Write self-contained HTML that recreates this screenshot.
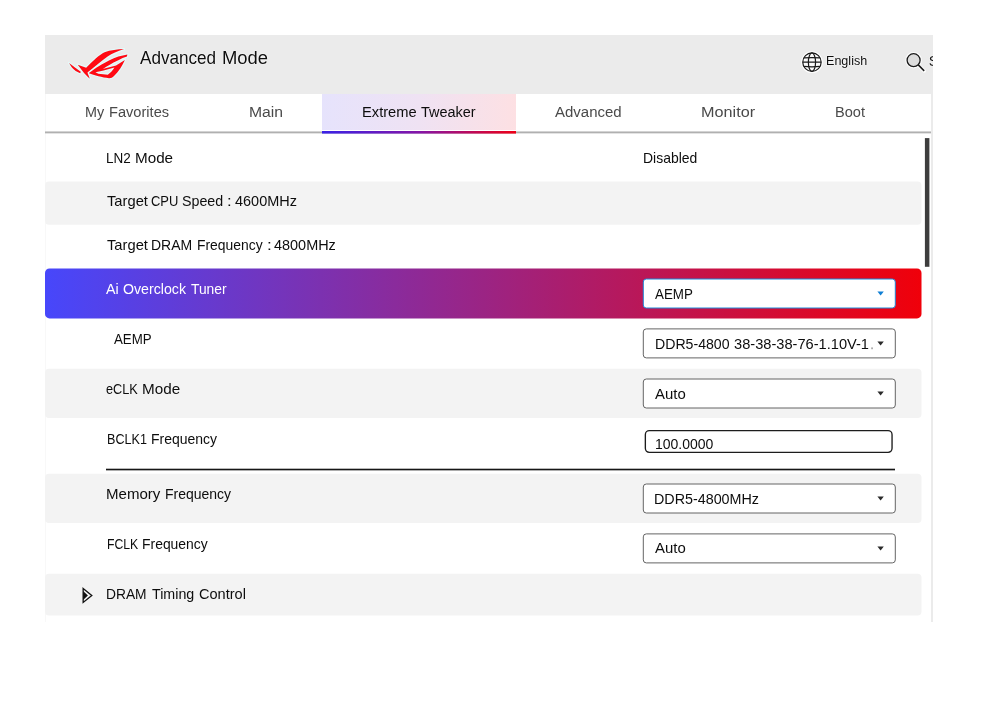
<!DOCTYPE html>
<html><head><meta charset="utf-8"><title>Advanced Mode</title>
<style>
html,body{margin:0;padding:0;background:#fff;}
body{width:983px;height:720px;position:relative;overflow:hidden;font-family:"Liberation Sans",sans-serif;}
.abs{position:absolute;}
.t{position:absolute;white-space:nowrap;line-height:1;transform-origin:0 0;font-family:"Liberation Sans",sans-serif;}
#hdr{position:absolute;left:45px;top:35px;width:888px;height:59px;background:#ebebeb;overflow:hidden;}
#tabs{position:absolute;left:45px;top:94px;width:886px;height:37px;background:#fff;}
#acttab{position:absolute;left:322px;top:94px;width:194px;height:36px;background:linear-gradient(to right,#e6e3fc 0%,#efe2f3 50%,#fde0e3 100%);}
#rborder{position:absolute;left:931px;top:94px;width:2px;height:528px;background:#ebebeb;}
#lborder{position:absolute;left:45px;top:94px;width:1px;height:528px;background:#f8f8f8;}
</style></head>
<body>
<div id="hdr"></div>
<div id="tabs"></div>
<div id="acttab"></div>
<div id="rborder"></div>
<div id="lborder"></div>

<svg class="abs" style="left:0;top:0" width="983" height="720" viewBox="0 0 983 720">
<defs><linearGradient id="sg" gradientUnits="userSpaceOnUse" x1="45" x2="921.5" y1="0" y2="0"><stop offset="0" stop-color="#4747fb"/><stop offset="0.5" stop-color="#9b2484"/><stop offset="1" stop-color="#f0000a"/></linearGradient></defs>
<rect x="45" y="181.5" width="876.5" height="43.2" rx="4" fill="#f3f3f3"/>
<rect x="45" y="268.5" width="876.5" height="49.9" rx="4.5" fill="url(#sg)"/>
<rect x="45" y="368.7" width="876.5" height="49.4" rx="4" fill="#f3f3f3"/>
<rect x="45" y="473.7" width="876.5" height="49.4" rx="4" fill="#f3f3f3"/>
<rect x="45" y="573.8" width="876.5" height="41.7" rx="4" fill="#f3f3f3"/>
<rect x="924.9" y="138.1" width="4.5" height="128.7" fill="#3d3d3d"/>
<!-- tab underline -->
<rect x="45" y="131.45" width="886" height="1.9" fill="#b0b0b0"/>
<defs><linearGradient id="ag" x1="0" x2="1" y1="0" y2="0"><stop offset="0" stop-color="#3a22e6"/><stop offset="0.5" stop-color="#8416a8"/><stop offset="1" stop-color="#ee0016"/></linearGradient></defs>
<rect x="322" y="131" width="194" height="2.6" fill="url(#ag)"/>
<rect x="643.3" y="279.00" width="252" height="29" rx="3" fill="#fff" stroke="#1f88d8" stroke-width="1"/><path d="M877.4 291.50 h6.4 l-3.2 4.1 Z" fill="#0f7fd4"/>
<rect x="643.3" y="328.90" width="252" height="29" rx="3" fill="#fff" stroke="#646464" stroke-width="1"/><path d="M877.4 341.40 h6.4 l-3.2 4.1 Z" fill="#2a2a2a"/>
<rect x="871.3" y="347.4" width="1.5" height="1.8" fill="#9a9a9a"/>
<rect x="643.3" y="379.00" width="252" height="29" rx="3" fill="#fff" stroke="#646464" stroke-width="1"/><path d="M877.4 391.50 h6.4 l-3.2 4.1 Z" fill="#2a2a2a"/>
<rect x="645.35" y="430.65" width="246.7" height="21.7" rx="4" fill="#fff" stroke="#1c1c1c" stroke-width="1.35"/>
<rect x="106" y="468.7" width="789" height="1.65" fill="#161616"/>
<rect x="643.3" y="484.00" width="252" height="29" rx="3" fill="#fff" stroke="#646464" stroke-width="1"/><path d="M877.4 496.50 h6.4 l-3.2 4.1 Z" fill="#2a2a2a"/>
<rect x="643.3" y="533.90" width="252" height="29" rx="3" fill="#fff" stroke="#646464" stroke-width="1"/><path d="M877.4 546.40 h6.4 l-3.2 4.1 Z" fill="#2a2a2a"/>
</svg>

<!-- expand arrow -->
<svg class="abs" style="left:80px;top:584px" width="16" height="23" viewBox="0 0 16 23">
<path d="M3.15 4.45 L11.8 11.45 L3.15 18.45 Z" fill="none" stroke="#111" stroke-width="1.3" stroke-linejoin="miter"/>
<path d="M3.15 6.9 L7.9 11.45 L3.15 16.0 Z" fill="#111"/>
</svg>

<!-- ROG logo: coordinates in 14.9x zoom space of region (66,44)-(132,84) -->
<svg class="abs" style="left:66px;top:44px" width="66" height="40" viewBox="0 0 983 596">
<g fill="#ff0a14" stroke="#e4fbfb" stroke-width="34" stroke-linejoin="round" paint-order="stroke" fill-rule="evenodd">
<path d="M45 283 C95 318 160 372 220 415 L212 434 C150 415 92 372 45 283 Z"/>
<path d="M175 308 L300 353 C400 248 500 158 575 122 C660 92 770 80 864 76 C760 112 690 140 620 185 C530 250 425 340 320 425 L354 517 C300 470 240 400 175 308 Z"/>
<path d="M342 432 C400 392 450 355 500 325 C550 292 595 268 640 245 C690 222 735 203 780 188 C825 174 870 165 914 156 L908 188 C865 202 822 220 780 243 C730 266 685 290 640 316 C600 340 575 356 545 374 L745 322 L877 238 C842 320 790 402 715 476 C690 501 668 511 640 509 C540 497 420 464 342 435 Z M438 422 L482 442 L622 458 C660 436 692 400 722 352 L560 395 Z"/>
</g>
</svg>


<!-- globe -->
<svg class="abs" style="left:800px;top:50px" width="25" height="25" viewBox="0 0 25 25">
<circle cx="11.96" cy="12.17" r="9.2" fill="#fbfbfb" stroke="#fff" stroke-width="3.4" opacity="0.92"/>
<g fill="none" stroke="#1a1a1a" stroke-width="1.2">
<circle cx="11.96" cy="12.17" r="9.2"/>
<ellipse cx="11.96" cy="12.17" rx="3.6" ry="9.2"/>
<path d="M2.8 12.17 H21.1 M3.9 7.95 Q11.96 7.2 20 7.95 M3.9 16.4 Q11.96 17.15 20 16.4"/>
</g>
</svg>

<!-- search -->
<svg class="abs" style="left:900px;top:48px" width="30" height="28" viewBox="0 0 30 28">
<g fill="none" stroke="#fff" stroke-width="3.6" opacity="0.9" stroke-linecap="round"><circle cx="13.6" cy="12.2" r="6.5"/><path d="M18.3 16.9 L24.2 22.9"/></g>
<circle cx="13.6" cy="12.2" r="6.5" fill="#dcdcdc" stroke="#1a1a1a" stroke-width="1.3"/>
<path d="M18.3 16.9 L24.2 22.9" stroke="#1a1a1a" stroke-width="1.5" fill="none"/>
</svg>
<div class="abs" style="left:925px;top:45px;width:8px;height:30px;overflow:hidden;will-change:transform;"><span class="t" id="t_s" style="left:3.8px;top:9.3px;font-size:14.6px;color:#151515;text-shadow:0 0 1.5px #fff,0 0 1.5px #fff;">Search</span></div>

<div id="txt" style="position:absolute;left:0;top:0;width:983px;height:720px;will-change:transform;">
<span class="t" id="t_adv0" style="left:139.97px;top:49.00px;font-size:18.8px;letter-spacing:0.000px;transform:scaleX(0.9109);color:#0d0d0d;text-shadow:0 0 1.5px #fff,0 0 1px #fff;">Advanced</span>
<span class="t" id="t_adv1" style="left:222.18px;top:49.00px;font-size:18.8px;letter-spacing:0.000px;transform:scaleX(0.9805);color:#0d0d0d;text-shadow:0 0 1.5px #fff,0 0 1px #fff;">Mode</span>
<span class="t" id="t_fav0" style="left:84.66px;top:104.00px;font-size:15.2px;letter-spacing:0.000px;transform:scaleX(0.9467);color:#4a4a4a;">My</span>
<span class="t" id="t_fav1" style="left:109.40px;top:104.00px;font-size:15.2px;letter-spacing:0.000px;transform:scaleX(0.9620);color:#4a4a4a;">Favorites</span>
<span class="t" id="t_main0" style="left:248.98px;top:104.00px;font-size:15.2px;letter-spacing:0.000px;transform:scaleX(1.0351);color:#4a4a4a;">Main</span>
<span class="t" id="t_ext0" style="left:361.66px;top:104.00px;font-size:15.2px;letter-spacing:0.000px;transform:scaleX(0.9667);color:#0d0d0d;">Extreme</span>
<span class="t" id="t_ext1" style="left:421.10px;top:104.00px;font-size:15.2px;letter-spacing:0.000px;transform:scaleX(0.9526);color:#0d0d0d;">Tweaker</span>
<span class="t" id="t_advd0" style="left:554.75px;top:104.00px;font-size:15.2px;letter-spacing:0.000px;transform:scaleX(0.9864);color:#4a4a4a;">Advanced</span>
<span class="t" id="t_mon0" style="left:700.76px;top:104.00px;font-size:15.2px;letter-spacing:0.000px;transform:scaleX(1.0678);color:#4a4a4a;">Monitor</span>
<span class="t" id="t_boot0" style="left:834.73px;top:104.00px;font-size:15.2px;letter-spacing:0.000px;transform:scaleX(0.9586);color:#4a4a4a;">Boot</span>
<span class="t" id="t_eng0" style="left:825.88px;top:54.00px;font-size:13.4px;letter-spacing:0.000px;transform:scaleX(0.9378);color:#0d0d0d;text-shadow:0 0 1.5px #fff,0 0 1.5px #fff;">English</span>
<span class="t" id="l_ln20" style="left:105.93px;top:151.00px;font-size:14.8px;letter-spacing:0.000px;transform:scaleX(0.9107);color:#0d0d0d;">LN2</span>
<span class="t" id="l_ln21" style="left:135.09px;top:151.00px;font-size:14.8px;letter-spacing:0.000px;transform:scaleX(1.0291);color:#0d0d0d;">Mode</span>
<span class="t" id="l_cpu0" style="left:106.84px;top:194.00px;font-size:14.8px;letter-spacing:0.000px;transform:scaleX(0.9945);color:#0d0d0d;">Target</span>
<span class="t" id="l_cpu1" style="left:151.38px;top:194.00px;font-size:14.8px;letter-spacing:0.000px;transform:scaleX(0.8751);color:#0d0d0d;">CPU</span>
<span class="t" id="l_cpu2" style="left:182.15px;top:194.00px;font-size:14.8px;letter-spacing:0.000px;transform:scaleX(0.9633);color:#0d0d0d;">Speed</span>
<span class="t" id="l_cpu3" style="left:227.10px;top:194.00px;font-size:14.8px;letter-spacing:0.000px;transform:scaleX(1.1303);color:#0d0d0d;">:</span>
<span class="t" id="l_cpu4" style="left:234.80px;top:194.00px;font-size:14.8px;letter-spacing:0.000px;transform:scaleX(0.9772);color:#0d0d0d;">4600MHz</span>
<span class="t" id="l_dram0" style="left:106.84px;top:238.00px;font-size:14.8px;letter-spacing:0.000px;transform:scaleX(0.9945);color:#0d0d0d;">Target</span>
<span class="t" id="l_dram1" style="left:151.02px;top:238.00px;font-size:14.8px;letter-spacing:0.000px;transform:scaleX(0.9448);color:#0d0d0d;">DRAM</span>
<span class="t" id="l_dram2" style="left:196.83px;top:238.00px;font-size:14.8px;letter-spacing:0.000px;transform:scaleX(0.9386);color:#0d0d0d;">Frequency</span>
<span class="t" id="l_dram3" style="left:267.22px;top:238.00px;font-size:14.8px;letter-spacing:0.000px;transform:scaleX(1.1605);color:#0d0d0d;">:</span>
<span class="t" id="l_dram4" style="left:274.36px;top:238.00px;font-size:14.8px;letter-spacing:0.000px;transform:scaleX(0.9763);color:#0d0d0d;">4800MHz</span>
<span class="t" id="l_ai0" style="left:106.03px;top:282.00px;font-size:14.8px;letter-spacing:0.000px;transform:scaleX(0.9632);color:#ffffff;">Ai</span>
<span class="t" id="l_ai1" style="left:123.14px;top:282.00px;font-size:14.8px;letter-spacing:0.000px;transform:scaleX(0.9579);color:#ffffff;">Overclock</span>
<span class="t" id="l_ai2" style="left:190.91px;top:282.00px;font-size:14.8px;letter-spacing:0.000px;transform:scaleX(0.9341);color:#ffffff;">Tuner</span>
<span class="t" id="l_aemp0" style="left:114.11px;top:332.00px;font-size:14.8px;letter-spacing:0.000px;transform:scaleX(0.8974);color:#0d0d0d;">AEMP</span>
<span class="t" id="l_eclk0" style="left:105.79px;top:382.00px;font-size:14.8px;letter-spacing:0.000px;transform:scaleX(0.8602);color:#0d0d0d;">eCLK</span>
<span class="t" id="l_eclk1" style="left:142.42px;top:382.00px;font-size:14.8px;letter-spacing:0.000px;transform:scaleX(1.0300);color:#0d0d0d;">Mode</span>
<span class="t" id="l_bclk0" style="left:106.89px;top:432.00px;font-size:14.8px;letter-spacing:0.000px;transform:scaleX(0.8505);color:#0d0d0d;">BCLK1</span>
<span class="t" id="l_bclk1" style="left:151.20px;top:432.00px;font-size:14.8px;letter-spacing:0.000px;transform:scaleX(0.9454);color:#0d0d0d;">Frequency</span>
<span class="t" id="l_mem0" style="left:106.09px;top:487.00px;font-size:14.8px;letter-spacing:0.000px;transform:scaleX(1.0164);color:#0d0d0d;">Memory</span>
<span class="t" id="l_mem1" style="left:165.09px;top:487.00px;font-size:14.8px;letter-spacing:0.000px;transform:scaleX(0.9452);color:#0d0d0d;">Frequency</span>
<span class="t" id="l_fclk0" style="left:106.82px;top:537.00px;font-size:14.8px;letter-spacing:0.000px;transform:scaleX(0.8268);color:#0d0d0d;">FCLK</span>
<span class="t" id="l_fclk1" style="left:141.83px;top:537.00px;font-size:14.8px;letter-spacing:0.000px;transform:scaleX(0.9408);color:#0d0d0d;">Frequency</span>
<span class="t" id="l_dtc0" style="left:105.94px;top:587.00px;font-size:14.8px;letter-spacing:0.000px;transform:scaleX(0.9315);color:#0d0d0d;">DRAM</span>
<span class="t" id="l_dtc1" style="left:151.60px;top:587.00px;font-size:14.8px;letter-spacing:0.000px;transform:scaleX(0.9643);color:#0d0d0d;">Timing</span>
<span class="t" id="l_dtc2" style="left:198.63px;top:587.00px;font-size:14.8px;letter-spacing:0.000px;transform:scaleX(0.9845);color:#0d0d0d;">Control</span>
<span class="t" id="v_dis0" style="left:643.24px;top:151.00px;font-size:14.8px;letter-spacing:0.000px;transform:scaleX(0.9423);color:#0d0d0d;">Disabled</span>
<span class="t" id="v_aemp0" style="left:654.76px;top:287.00px;font-size:14.8px;letter-spacing:0.000px;transform:scaleX(0.9019);color:#0d0d0d;">AEMP</span>
<span class="t" id="v_ddr0" style="left:655.20px;top:337.00px;font-size:14.8px;letter-spacing:0.000px;transform:scaleX(0.9538);color:#0d0d0d;">DDR5-4800</span>
<span class="t" id="v_ddr1" style="left:733.56px;top:337.00px;font-size:14.8px;letter-spacing:0.000px;transform:scaleX(0.9886);color:#0d0d0d;">38-38-38-76-1.10V-1</span>
<span class="t" id="v_auto10" style="left:655.03px;top:387.00px;font-size:14.8px;letter-spacing:0.000px;transform:scaleX(1.0085);color:#0d0d0d;">Auto</span>
<span class="t" id="v_1000" style="left:655.40px;top:437.00px;font-size:14.8px;letter-spacing:0.000px;transform:scaleX(0.9463);color:#0d0d0d;">100.0000</span>
<span class="t" id="v_mhz0" style="left:654.15px;top:492.00px;font-size:14.8px;letter-spacing:0.000px;transform:scaleX(0.9673);color:#0d0d0d;">DDR5-4800MHz</span>
<span class="t" id="v_auto20" style="left:655.03px;top:541.00px;font-size:14.8px;letter-spacing:0.000px;transform:scaleX(1.0085);color:#0d0d0d;">Auto</span>
</div>
</body></html>
